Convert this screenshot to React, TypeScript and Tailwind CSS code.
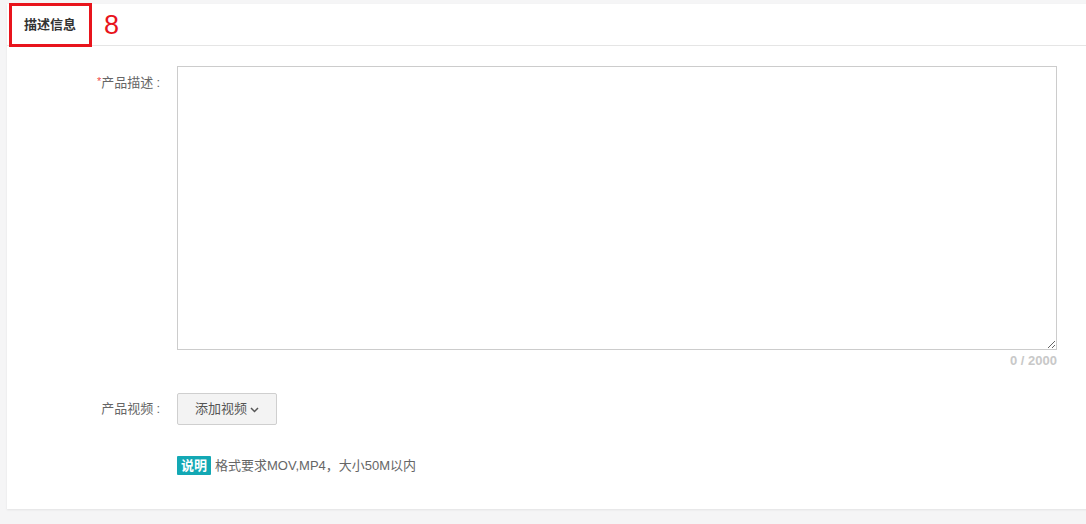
import React from 'react';

const font = { fontFamily: '"Liberation Sans", "Noto Sans CJK SC", sans-serif' };

const App: React.FC = () => {
  return (
    <div className="w-[1086px] h-[524px] overflow-hidden bg-[#f5f5f6] pl-[7px] pt-[4px]" style={font}>
      <div className="relative w-[1090px] h-[505px] bg-white shadow-[0_1px_2px_rgba(0,0,0,0.08)]">
        {/* header */}
        <div className="h-[42px] flex items-center border-b border-[#e5e5e5] pl-[17px]">
          <span className="text-[13px] font-bold text-[#333]">描述信息</span>
        </div>
        <div className="absolute left-[2px] top-[-1px] w-[83px] h-[44px] border-[3px] border-[#e8141c]" />
        <span className="absolute left-[97px] top-[5px] text-[27px] leading-[32px] text-[#e8141c]">8</span>

        {/* description */}
        <div className="flex pt-[20px]">
          <div className="w-[155px] pr-[2px] pt-[7px] text-right text-[13px] text-[#666]">
            <span className="text-[#f04848] text-[11px] align-top">*</span>产品描述<span className="ml-[3px]">:</span>
          </div>
          <div className="ml-[15px] w-[880px] flex flex-col">
            <textarea className="w-[880px] h-[284px] border border-[#cccccc] outline-none resize-y" />
            <div className="text-right text-[13px] font-bold text-[#c8c8c8] mt-[2px] leading-[17px]">0 / 2000</div>
          </div>
        </div>

        {/* video */}
        <div className="flex items-center mt-[24px]">
          <div className="w-[155px] pr-[2px] text-right text-[13px] text-[#666]">产品视频<span className="ml-[3px]">:</span></div>
          <button className="ml-[15px] w-[100px] h-[32px] bg-[#f3f3f3] border border-[#cfcfcf] rounded-[2px] text-[13px] text-[#555] flex items-center justify-center gap-[3px]">
            添加视频
            <svg width="9" height="6" viewBox="0 0 9 6" className="mt-[1px]">
              <path d="M1 1l3.5 3.5L8 1" fill="none" stroke="#555" strokeWidth="1.5" />
            </svg>
          </button>
        </div>

        {/* note */}
        <div className="flex items-center mt-[31px] ml-[170px] gap-[4px]">
          <span className="h-[19px] px-[4px] bg-[#13a8b4] text-white text-[13px] font-bold leading-[19px] rounded-[1px]">说明</span>
          <span className="text-[13px] text-[#666]">格式要求MOV,MP4，大小50M以内</span>
        </div>
      </div>
    </div>
  );
};

export default App;
